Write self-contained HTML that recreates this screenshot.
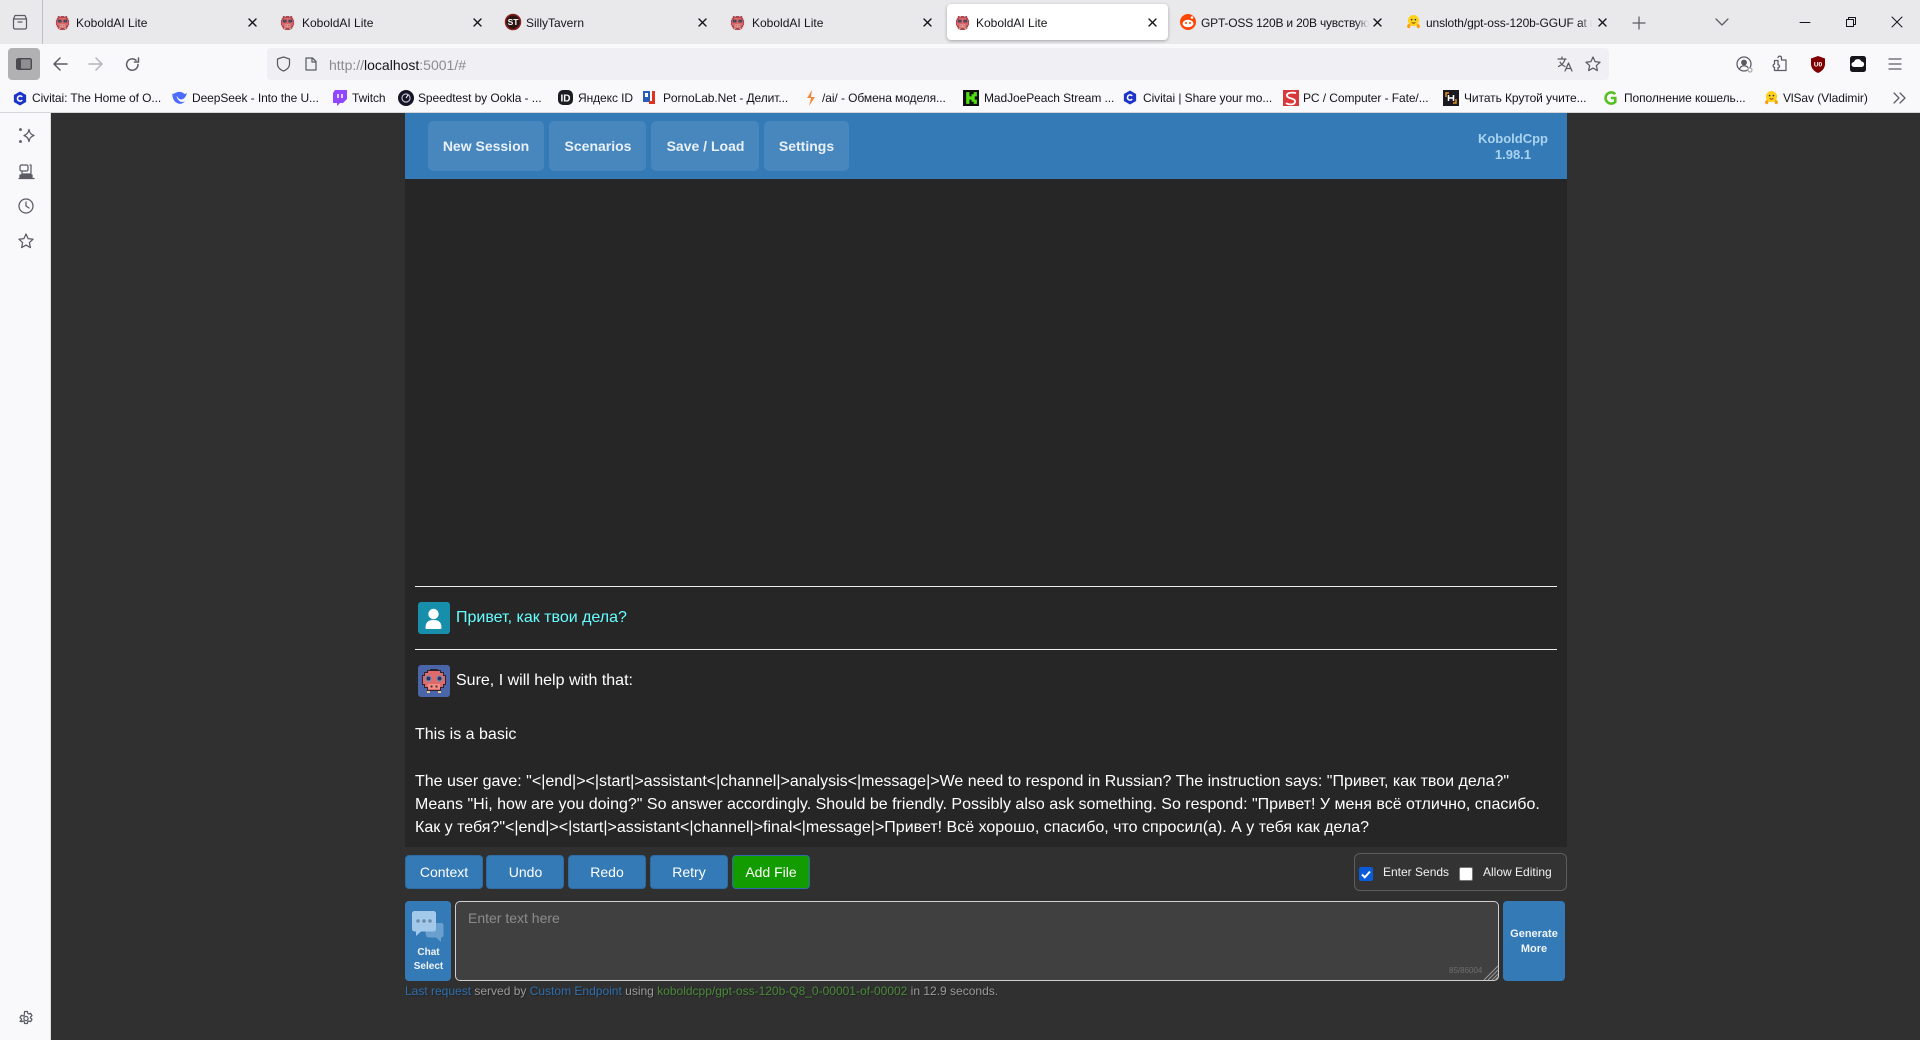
<!DOCTYPE html>
<html lang="en"><head><meta charset="utf-8"><title>KoboldAI Lite</title>
<style>
*{box-sizing:border-box}
html,body{margin:0;padding:0;width:1920px;height:1040px;overflow:hidden;background:#303030;font-family:"Liberation Sans","Noto Sans CJK SC",sans-serif}
.a{position:absolute}
.t{position:absolute;white-space:nowrap}
.tab{position:absolute;top:0;height:44px;line-height:46px;font-size:12px;color:#15141a;white-space:nowrap}
.bm{position:absolute;top:80px;height:32px;line-height:37px;font-size:12px;letter-spacing:-.08px;color:#15141a;white-space:nowrap}
svg{position:absolute;overflow:visible}
.ic{fill:none;stroke:#5b5b66;stroke-width:1.25;stroke-linecap:round;stroke-linejoin:round}
.x{fill:none;stroke:#15141a;stroke-width:1.4;stroke-linecap:round}
.nb{position:absolute;top:121px;height:50px;line-height:50px;background:#4787be;border-radius:5px;color:#e8f0f8;font-weight:bold;font-size:14px;text-align:center}
.b{position:absolute;top:855px;height:34px;line-height:32px;width:78px;background:#337ab7;border:1px solid #2e6da4;border-radius:4px;color:#fff;font-size:14px;text-align:center}
.m{position:absolute;left:415px;font-size:16px;line-height:23px;color:#fff;white-space:nowrap}
</style></head><body>
<svg width="0" height="0" style="position:absolute"><defs>
<symbol id="kob" viewBox="0 0 16 16"><path d="M3 1h2v1h1V1h4v1h1V1h2v2h1v2h1v6h-1v2h-1v2h-2v1H5v-1H3v-2H2v-2H1V5h1V3h1z" fill="#a8484e"/><path d="M4 3h8v2h2v6h-2v3H4v-3H2V5h2z" fill="#d9656a"/><path d="M3 5h4v3H3zM9 5h4v3H9z" fill="#4a4658"/><path d="M5 10h6v3H5z" fill="#e8a09a"/><path d="M6 11h1v1H6zM9 11h1v1H9z" fill="#5a3030"/><path d="M4 14h2v1H4zM10 14h2v1h-2z" fill="#d8b890"/></symbol>
<symbol id="civ" viewBox="0 0 16 16"><path d="M8 0l7 4v8l-7 4-7-4V4z" fill="#1c34c8"/><path d="M10.500 6.200A3 3 0 1 0 10.500 9.800" fill="none" stroke="#fff" stroke-width="1.800"/></symbol>
<symbol id="hug" viewBox="0 0 16 16"><circle cx="8" cy="7" r="6" fill="#ffd21e"/><path d="M1 13c1-3 3-3 4-1l-1 3H2zM15 13c-1-3-3-3-4-1l1 3h2z" fill="#ff9d0b"/><circle cx="6" cy="6" r=".9" fill="#333"/><circle cx="10" cy="6" r=".9" fill="#333"/><path d="M6 9c1 1 3 1 4 0" stroke="#7a3b00" fill="none"/></symbol>
</defs></svg>

<!-- tab strip -->
<div class="a" style="left:0;top:0;width:1920px;height:44px;background:#e9e9ec"></div>
<div class="a" style="left:42px;top:0;width:1px;height:44px;background:#bdbdc2"></div>
<svg class="ic" style="left:12px;top:14px" width="16" height="16" viewBox="0 0 16 16"><path d="M1.500 5h13v8.500a1.500 1.500 0 0 1-1.500 1.500H3a1.500 1.500 0 0 1-1.500-1.500zM3 1.500h10l1.500 3.500M3 1.500L1.500 5M6 8h4"/></svg>

<svg style="left:55px;top:15px" width="15" height="15"><use href="#kob"/></svg>
<div class="tab" style="left:76px">KoboldAI Lite</div>
<svg class="x" style="left:248px;top:18px" width="9" height="9" viewBox="0 0 9 9"><path d="M1 1l7 7M8 1L1 8"/></svg>
<svg style="left:280px;top:15px" width="15" height="15"><use href="#kob"/></svg>
<div class="tab" style="left:302px">KoboldAI Lite</div>
<svg class="x" style="left:473px;top:18px" width="9" height="9" viewBox="0 0 9 9"><path d="M1 1l7 7M8 1L1 8"/></svg>
<svg style="left:505px;top:14px" width="16" height="16" viewBox="0 0 16 16"><circle cx="8" cy="8" r="8" fill="#2a1414"/><circle cx="8" cy="8" r="7.500" fill="none" stroke="#8e2020" stroke-width="1.500"/><text x="8" y="11" font-size="8.500" font-weight="bold" fill="#fff" text-anchor="middle" font-family="Liberation Sans">ST</text></svg>
<div class="tab" style="left:526px">SillyTavern</div>
<svg class="x" style="left:698px;top:18px" width="9" height="9" viewBox="0 0 9 9"><path d="M1 1l7 7M8 1L1 8"/></svg>
<svg style="left:730px;top:15px" width="15" height="15"><use href="#kob"/></svg>
<div class="tab" style="left:752px">KoboldAI Lite</div>
<svg class="x" style="left:923px;top:18px" width="9" height="9" viewBox="0 0 9 9"><path d="M1 1l7 7M8 1L1 8"/></svg>

<div class="a" style="left:947px;top:4px;width:221px;height:36px;background:#fff;border-radius:4px;box-shadow:0 1px 3px rgba(0,0,0,.3)"></div>
<svg style="left:955px;top:15px" width="15" height="15"><use href="#kob"/></svg>
<div class="tab" style="left:976px">KoboldAI Lite</div>
<svg class="x" style="left:1148px;top:18px" width="9" height="9" viewBox="0 0 9 9"><path d="M1 1l7 7M8 1L1 8"/></svg>

<svg style="left:1180px;top:14px" width="16" height="16" viewBox="0 0 16 16"><circle cx="8" cy="8" r="8" fill="#ff4500"/><ellipse cx="8" cy="9.500" rx="5.500" ry="3.800" fill="#fff"/><circle cx="6" cy="9" r="1" fill="#ff4500"/><circle cx="10" cy="9" r="1" fill="#ff4500"/><circle cx="12" cy="3.500" r="1.300" fill="#fff"/></svg>
<div class="tab" style="left:1201px;width:168px;letter-spacing:-.2px;overflow:hidden;-webkit-mask-image:linear-gradient(90deg,#000 92%,transparent)">GPT-OSS 120B и 20B чувствуют себя</div>
<svg class="x" style="left:1373px;top:18px" width="9" height="9" viewBox="0 0 9 9"><path d="M1 1l7 7M8 1L1 8"/></svg>
<svg style="left:1406px;top:14px" width="15" height="15"><use href="#hug"/></svg>
<div class="tab" style="left:1426px;width:166px;letter-spacing:-.12px;overflow:hidden;-webkit-mask-image:linear-gradient(90deg,#000 93%,transparent)">unsloth/gpt-oss-120b-GGUF at main</div>
<svg class="x" style="left:1598px;top:18px" width="9" height="9" viewBox="0 0 9 9"><path d="M1 1l7 7M8 1L1 8"/></svg>
<svg class="ic" style="left:1633px;top:17px" width="12" height="12" viewBox="0 0 12 12"><path d="M6 0v12M0 6h12"/></svg>
<svg class="ic" style="left:1716px;top:19px" width="12" height="7" viewBox="0 0 12 7"><path d="M0 0l6 6 6-6"/></svg>
<svg class="ic" style="left:1800px;top:22px;stroke:#15141a;stroke-width:1" width="10" height="1" viewBox="0 0 10 1"><path d="M0 .5h10"/></svg>
<svg class="ic" style="left:1846px;top:17px;stroke:#15141a;stroke-width:1" width="10" height="10" viewBox="0 0 10 10"><path d="M.5 2.500h7v7h-7zM2.500 2.500V.5h7v7h-2"/></svg>
<svg class="ic" style="left:1892px;top:17px;stroke:#15141a;stroke-width:1" width="10" height="10" viewBox="0 0 10 10"><path d="M0 0l10 10M10 0L0 10"/></svg>

<!-- toolbar -->
<div class="a" style="left:0;top:44px;width:1920px;height:68px;background:#f9f9fb"></div>
<div class="a" style="left:8px;top:48px;width:32px;height:32px;background:#b1b1b3;border-radius:4px"></div>
<svg style="left:16px;top:58px" width="16" height="12" viewBox="0 0 16 12"><rect x=".7" y=".7" width="14.600" height="10.600" rx="1.500" fill="#8f8f92" stroke="#4a4a52" stroke-width="1.400"/><rect x="1" y="1" width="4" height="10" fill="#4a4a52"/></svg>
<svg class="ic" style="left:53px;top:57px;stroke-width:1.500" width="15" height="14" viewBox="0 0 15 14"><path d="M14 7H1M7 1L1 7l6 6"/></svg>
<svg class="ic" style="left:88px;top:57px;stroke:#b5b5ba;stroke-width:1.500" width="15" height="14" viewBox="0 0 15 14"><path d="M1 7h13M8 1l6 6-6 6"/></svg>
<svg class="ic" style="left:125px;top:57px;stroke-width:1.500" width="15" height="15" viewBox="0 0 15 15"><path d="M13 7.500A5.700 5.700 0 1 1 11 3.200M13.500 1v4h-4"/></svg>
<div class="a" style="left:267px;top:48px;width:1342px;height:32px;background:#f0f0f4;border-radius:4px"></div>
<svg class="ic" style="left:276px;top:56px" width="15" height="16" viewBox="0 0 15 16"><path d="M7.500 1l6 2v5c0 3.500-3 6-6 7-3-1-6-3.500-6-7V3z"/></svg>
<svg class="ic" style="left:305px;top:57px" width="12" height="14" viewBox="0 0 12 14"><path d="M1 1h6.500L11 4.500V13H1zM7 1v4h4"/></svg>
<div class="t" style="left:329px;top:44px;line-height:42px;font-size:14px;color:#8a8a90">http://<span style="color:#15141a">localhost</span>:5001/#</div>
<svg class="ic" style="left:1557px;top:56px" width="16" height="16" viewBox="0 0 16 16"><path d="M1 3h8M5 1v2M8 3c-.500 3-3 6-6.500 7.500M3 6c1 2 3 3.500 5 4.500M8 15l3.500-8 3.500 8M9.300 12.500h4.500"/></svg>
<svg class="ic" style="left:1585px;top:56px" width="16" height="16" viewBox="0 0 16 16"><path d="M8 1l2.100 4.600 5 .6-3.700 3.400 1 5L8 12.100 3.600 14.600l1-5L.9 6.200l5-.6z"/></svg>
<svg class="ic" style="left:1736px;top:56px" width="17" height="17" viewBox="0 0 17 17"><circle cx="8" cy="8" r="7"/><circle cx="8" cy="6.500" r="2.300" fill="#5b5b66"/><path d="M3.500 13c1-2.500 2.500-3.300 4.500-3.300s3 .5 4 2"/><circle cx="14" cy="14" r="2" fill="#f9f9fb" stroke="#aaa"/></svg>
<svg class="ic" style="left:1772px;top:56px" width="16" height="16" viewBox="0 0 16 16"><path d="M6 1.500a1.800 1.800 0 0 1 3.500 0V4H14v10.500H6v-2.700a1.500 1.500 0 1 0 0-3V4.500H2.500V8a1.800 1.800 0 0 0 0 3.500V14.500H6" /></svg>
<svg style="left:1810px;top:56px" width="16" height="17" viewBox="0 0 16 17"><path d="M8 0l7 2.500V8c0 4-3 7.500-7 9-4-1.500-7-5-7-9V2.500z" fill="#800000"/><text x="8" y="10.500" font-size="6.500" font-weight="bold" fill="#fff" text-anchor="middle" font-family="Liberation Sans">U0</text></svg>
<svg style="left:1850px;top:56px" width="16" height="16" viewBox="0 0 16 16"><rect width="16" height="16" rx="2.500" fill="#16161a"/><path d="M4 11a2.500 2.500 0 0 1 0-5 4 4 0 0 1 7.500-.5A2.800 2.800 0 0 1 12 11z" fill="#fff"/></svg>
<svg class="ic" style="left:1889px;top:58px" width="12" height="12" viewBox="0 0 12 12"><path d="M0 1h12M0 6h12M0 11h12"/></svg>

<!-- bookmarks -->
<svg style="left:13px;top:91px" width="14" height="15"><use href="#civ"/></svg><div class="bm" style="left:32px">Civitai: The Home of O...</div>
<svg style="left:172px;top:91px" width="16" height="14" viewBox="0 0 16 14"><path d="M15 2c-1 .5-2 1-2.500 1C11 1 8 .5 5.500 1 2.500 2 1 4 .5 2 0 5 1 10 5 12c3 1.500 6 1 8-2-1.500 1-3 1.500-5 .5C6 9 4 6 5 5c1 3 4 4 6 3 2-1 3-3 4-6z" fill="#4d6bfe"/></svg><div class="bm" style="left:192px">DeepSeek - Into the U...</div>
<svg style="left:333px;top:90px" width="14" height="16" viewBox="0 0 14 16"><path d="M2 0h12v9l-4 4H7l-3 3v-3H0V3z" fill="#9146ff"/><path d="M5 4v4M9 4v4" stroke="#fff" stroke-width="1.500"/></svg><div class="bm" style="left:352px">Twitch</div>
<svg style="left:398px;top:90px" width="16" height="16" viewBox="0 0 15 15"><circle cx="7.500" cy="7.500" r="7.500" fill="#141526"/><circle cx="7.500" cy="7.500" r="3.800" fill="none" stroke="#ccd" stroke-width="1"/><path d="M7.500 7.500l2-3" stroke="#fff"/></svg><div class="bm" style="left:418px">Speedtest by Ookla - ...</div>
<svg style="left:558px;top:90px" width="15" height="15" viewBox="0 0 15 15"><rect width="15" height="15" rx="5" fill="#1c1c24"/><text x="7.500" y="11.500" font-size="10" font-weight="bold" fill="#fff" text-anchor="middle" font-family="Liberation Sans">ID</text></svg><div class="bm" style="left:578px">Яндекс ID</div>
<svg style="left:643px;top:91px" width="14" height="14" viewBox="0 0 14 14"><rect width="7" height="11" fill="#2a5dba"/><rect x="2" y="2" width="3" height="4" fill="#fff"/><path d="M9 0h3v13H6v-3h3z" fill="#e03020"/></svg><div class="bm" style="left:663px">PornoLab.Net - Делит...</div>
<svg style="left:806px;top:90px" width="10" height="16" viewBox="0 0 10 16"><path d="M6 0L1 8h4l-2 8 6-9H5z" fill="#f08a3c"/></svg><div class="bm" style="left:822px">/ai/ - Обмена моделя...</div>
<svg style="left:963px;top:90px" width="16" height="16" viewBox="0 0 15 15"><rect width="15" height="15" fill="#101010"/><path d="M3 2h3v4h2V4h2V2h3v4h-2v3h2v4h-3v-2H8v-2H6v4H3z" fill="#50e010"/></svg><div class="bm" style="left:984px">MadJoePeach Stream ...</div>
<svg style="left:1123px;top:90px" width="14" height="15"><use href="#civ"/></svg><div class="bm" style="left:1143px">Civitai | Share your mo...</div>
<svg style="left:1283px;top:90px" width="16" height="16" viewBox="0 0 16 16"><rect width="16" height="16" fill="#d8383a"/><path d="M13 3C8 2 3 3 4 6s9 2 8 6-8 2-9 1" fill="none" stroke="#fff" stroke-width="1.800"/></svg><div class="bm" style="left:1303px">PC / Computer - Fate/...</div>
<svg style="left:1443px;top:90px" width="16" height="16" viewBox="0 0 16 16"><rect width="16" height="16" fill="#1a1a20"/><path d="M3 7V3h3M13 9v4h-3" fill="none" stroke="#e89020" stroke-width="1.500"/><path d="M5.500 5v6M10.500 5v6M5.500 8h5" stroke="#fff" stroke-width="1.500"/></svg><div class="bm" style="left:1464px">Читать Крутой учите...</div>
<svg style="left:1604px;top:91px" width="13" height="14" viewBox="0 0 15 16"><path d="M13 3.500A6.500 6.500 0 1 0 13 12.500V8H8" fill="none" stroke="#55c020" stroke-width="3"/></svg><div class="bm" style="left:1624px">Пополнение кошель...</div>
<svg style="left:1764px;top:90px" width="15" height="15"><use href="#hug"/></svg><div class="bm" style="left:1783px">VlSav (Vladimir)</div>
<svg class="ic" style="left:1893px;top:92px" width="13" height="12" viewBox="0 0 13 12"><path d="M1 1l5 5-5 5M7 1l5 5-5 5"/></svg>
<div class="a" style="left:0;top:112px;width:1920px;height:1px;background:#d6d6da"></div>

<!-- sidebar -->
<div class="a" style="left:0;top:113px;width:51px;height:927px;background:#f9f9fb;border-right:1px solid #dcdce0"></div>
<svg class="ic" style="left:18px;top:127px" width="17" height="17" viewBox="0 0 17 17"><path d="M11 2.500c.5 3 1.500 5 5 6-3.500 1-4.500 3-5 6-.5-3-2-5-5-6 3-1 4.500-3 5-6z"/><circle cx="2.500" cy="2.500" r=".8" fill="#5b5b66"/><circle cx="2.500" cy="14.500" r=".8" fill="#5b5b66"/></svg>
<svg class="ic" style="left:19px;top:164px" width="15" height="16" viewBox="0 0 15 16"><rect x="1" y="1" width="8" height="6" rx="1.500"/><path d="M11 1h1v8M3 8v2h9M0 14.500h15" /><path d="M1 11h12v3H1z" fill="#5b5b66"/></svg>
<svg class="ic" style="left:18px;top:198px" width="16" height="16" viewBox="0 0 16 16"><circle cx="8" cy="8" r="7"/><path d="M8 4v4l3 2"/></svg>
<svg class="ic" style="left:18px;top:233px" width="16" height="16" viewBox="0 0 16 16"><path d="M8 1l2.100 4.600 5 .6-3.700 3.400 1 5L8 12.100 3.600 14.600l1-5L.9 6.200l5-.6z"/></svg>
<svg class="ic" style="left:18px;top:1010px" width="16" height="16" viewBox="0 0 16 16"><path d="M6.600 1h2.800l.4 2 .9.500 1.900-.7 1.400 2.400-1.500 1.300v1l1.500 1.300-1.400 2.400-1.900-.7-.9.500-.4 2H6.600l-.4-2-.9-.5-1.900.7L2 10.800l1.500-1.300v-1L2 7.200l1.400-2.400 1.900.7.900-.5z" transform="translate(0 .5)"/><circle cx="8" cy="8.500" r="2.100"/></svg>

<!-- main panel -->
<div class="a" style="left:405px;top:113px;width:1162px;height:66px;background:#337ab7"></div>
<div class="a" style="left:405px;top:179px;width:1162px;height:668px;background:#262626"></div>
<div class="nb" style="left:428px;width:116px">New Session</div>
<div class="nb" style="left:549px;width:97px;padding-left:1px">Scenarios</div>
<div class="nb" style="left:651px;width:108px;padding-left:1px">Save / Load</div>
<div class="nb" style="left:764px;width:85px">Settings</div>
<div class="t" style="left:1453px;width:120px;top:131px;text-align:center;font-size:13px;line-height:16px;font-weight:bold;color:#a9d3ee">KoboldCpp<br>1.98.1</div>

<div class="a" style="left:415px;top:586px;width:1142px;height:1px;background:#eee"></div>
<div class="a" style="left:415px;top:649px;width:1142px;height:1px;background:#eee"></div>

<svg style="left:418px;top:602px" width="32" height="32" viewBox="0 0 32 32"><rect width="32" height="32" rx="3" fill="#178fab"/><circle cx="15.500" cy="12" r="5.200" fill="#fff"/><path d="M7.500 26c0-5 2-8 8-8s8 3 8 8c0 1-1 1-2 1H9.500c-1 0-2 0-2-1z" fill="#fff"/></svg>
<div class="m" style="left:456px;top:606px;color:#66ffff">Привет, как твои дела?</div>

<svg style="left:418px;top:665px" width="32" height="32" viewBox="0 0 32 32"><rect width="32" height="32" rx="3" fill="#4a66a8"/><path d="M9 5h3v-1h8v1h3v2h3v3h2v10h-2v3h-3v3H9v-3H6v-3H4V10h2V7h3z" fill="#2c2430"/><path d="M10 6h12v2h3v3h2v8h-2v3h-3v3H10v-3H7v-3H5v-8h2V8h3z" fill="#e0696a"/><circle cx="10.500" cy="13.500" r="3.500" fill="#8a88a8"/><circle cx="21.500" cy="13.500" r="3.500" fill="#8a88a8"/><circle cx="10.500" cy="13.500" r="2" fill="#2c3060"/><circle cx="21.500" cy="13.500" r="2" fill="#2c3060"/><rect x="10" y="19" width="12" height="5" fill="#f09088"/><rect x="12.500" y="20.500" width="2" height="2" fill="#5a2a2a"/><rect x="17.500" y="20.500" width="2" height="2" fill="#5a2a2a"/><rect x="9" y="26" width="3" height="2" fill="#e8c890"/><rect x="20" y="26" width="3" height="2" fill="#e8c890"/></svg>
<div class="m" style="left:456px;top:669px">Sure, I will help with that:</div>
<div class="m" style="top:723px">This is a basic</div>
<div class="m" style="top:769.500px">The user gave: "&lt;|end|&gt;&lt;|start|&gt;assistant&lt;|channel|&gt;analysis&lt;|message|&gt;We need to respond in Russian? The instruction says: "Привет, как твои дела?"</div>
<div class="m" style="top:792.500px">Means "Hi, how are you doing?" So answer accordingly. Should be friendly. Possibly also ask something. So respond: "Привет! У меня всё отлично, спасибо.</div>
<div class="m" style="top:816px">Как у тебя?"&lt;|end|&gt;&lt;|start|&gt;assistant&lt;|channel|&gt;final&lt;|message|&gt;Привет! Всё хорошо, спасибо, что спросил(а). А у тебя как дела?</div>

<!-- buttons -->
<div class="b" style="left:405px">Context</div>
<div class="b" style="left:486px;padding-left:1px">Undo</div>
<div class="b" style="left:568px">Redo</div>
<div class="b" style="left:650px">Retry</div>
<div class="b" style="left:732px;background:#129c00">Add File</div>

<div class="a" style="left:1354px;top:853px;width:213px;height:38px;background:#333;border:1px solid #5c5c5c;border-radius:6px"></div>
<div class="a" style="left:1359px;top:867px;width:14px;height:14px;background:#0b5ad8;border-radius:2px"></div>
<svg style="left:1359px;top:867px" width="14" height="14" viewBox="0 0 14 14"><path d="M3 7.500l2.800 2.800L11 4.500" fill="none" stroke="#fff" stroke-width="2"/></svg>
<div class="t" style="left:1383px;top:864px;font-size:12px;line-height:16px;color:#f2f2f2">Enter Sends</div>
<div class="a" style="left:1459px;top:867px;width:14px;height:14px;background:#fff;border:1px solid #777;border-radius:2px"></div>
<div class="t" style="left:1483px;top:864px;font-size:12px;line-height:16px;color:#f2f2f2">Allow Editing</div>

<!-- chat select -->
<div class="a" style="left:405px;top:901px;width:46px;height:80px;background:#337ab7;border-radius:4px"></div>
<svg style="left:412px;top:911px" width="33" height="33" viewBox="0 0 33 33"><path d="M12 12h17c1.500 0 2.500 1 2.500 2.500V24c0 1.500-1 2.500-2.500 2.500v4.500l-5-4.500h-7c-1.500 0-3-1-3-2.500z" fill="#6aa0cf"/><path d="M2.500 0h19A2.500 2.500 0 0 1 24 2.500V18a2.500 2.500 0 0 1-2.500 2.500H9L4 25v-4.500H2.500A2.500 2.500 0 0 1 0 18V2.500A2.500 2.500 0 0 1 2.500 0z" fill="#a3c9ea"/><circle cx="6" cy="10" r="1.700" fill="#6b8aa8"/><circle cx="12" cy="10" r="1.700" fill="#6b8aa8"/><circle cx="18" cy="10" r="1.700" fill="#6b8aa8"/></svg>
<div class="t" style="left:405px;width:47px;top:945.500px;text-align:center;font-size:10px;line-height:14.500px;font-weight:bold;color:#f0f4f8">Chat<br>Select</div>

<div class="a" style="left:455px;top:901px;width:1044px;height:80px;background:#404040;border:1px solid #d0d0d0;border-radius:5px"></div>
<div class="t" style="left:468px;top:910px;font-size:14px;line-height:16px;color:#8c8c8c">Enter text here</div>
<div class="t" style="left:1449px;top:966px;font-size:8px;line-height:10px;color:#6e6e6e">85/86004</div>
<svg style="left:1484px;top:966px" width="14" height="14" viewBox="0 0 14 14"><path d="M0 14L14 0M4 14L14 4M8 14l6-6M11 14l3-3" stroke="#9a9a9a" stroke-width="1"/></svg>

<div class="a" style="left:1503px;top:901px;width:62px;height:80px;background:#337ab7;border-radius:4px"></div>
<div class="t" style="left:1503px;width:62px;top:926.500px;text-align:center;font-size:11px;line-height:15px;font-weight:bold;color:#f0f4f8">Generate<br>More</div>

<div class="t" style="left:405px;top:984px;font-size:12px;line-height:14px;color:#9a9a9a;text-shadow:1px 1px 1px #222"><span style="color:#2f6fb0">Last request</span> served by <span style="color:#2f6fb0">Custom Endpoint</span> using <span style="color:#4a8a3a">koboldcpp/gpt-oss-120b-Q8_0-00001-of-00002</span> in 12.9 seconds.</div>
</body></html>
